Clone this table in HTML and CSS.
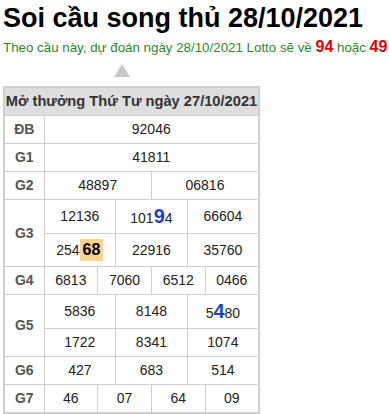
FILE: index.html
```html
<!DOCTYPE html>
<html lang="vi">
<head>
<meta charset="utf-8">
<title>Soi cầu song thủ 28/10/2021</title>
<link rel="stylesheet" href="styles.css">
</head>
<body>
<div class="page">
  <h1 class="title">Soi cầu song thủ 28/10/2021</h1>
  <p class="predict">Theo cầu này, dự đoán ngày 28/10/2021 Lotto sẽ về <b class="hot">94</b> hoặc <b class="hot">49</b></p>
  <div class="pointer"></div>
  <table class="result">
    <colgroup>
      <col class="c-label">
      <col><col><col><col><col><col><col><col><col><col><col><col>
    </colgroup>
    <thead>
      <tr><th colspan="13" class="head">Mở thưởng Thứ Tư ngày 27/10/2021</th></tr>
    </thead>
    <tbody>
      <tr><td class="lbl">ĐB</td><td colspan="12">92046</td></tr>
      <tr><td class="lbl">G1</td><td colspan="12">41811</td></tr>
      <tr><td class="lbl">G2</td><td colspan="6">48897</td><td colspan="6">06816</td></tr>
      <tr><td class="lbl" rowspan="2">G3</td><td colspan="4">12136</td><td colspan="4">101<span class="big">9</span>4</td><td colspan="4">66604</td></tr>
      <tr><td colspan="4">254<span class="mark">68</span></td><td colspan="4">22916</td><td colspan="4">35760</td></tr>
      <tr><td class="lbl">G4</td><td colspan="3">6813</td><td colspan="3">7060</td><td colspan="3">6512</td><td colspan="3">0466</td></tr>
      <tr><td class="lbl" rowspan="2">G5</td><td colspan="4">5836</td><td colspan="4">8148</td><td colspan="4">5<span class="big">4</span>80</td></tr>
      <tr><td colspan="4">1722</td><td colspan="4">8341</td><td colspan="4">1074</td></tr>
      <tr><td class="lbl">G6</td><td colspan="4">427</td><td colspan="4">683</td><td colspan="4">514</td></tr>
      <tr><td class="lbl">G7</td><td colspan="3">46</td><td colspan="3">07</td><td colspan="3">64</td><td colspan="3">09</td></tr>
    </tbody>
  </table>
</div>
</body>
</html>
```
FILE: styles.css
```css
html, body {
  margin: 0;
  padding: 0;
  background: #fff;
}
body {
  font-family: "Liberation Sans", Arial, sans-serif;
  color: #222;
}
.page {
  padding: 3px 0 0 3px;
}
.title {
  margin: 0;
  font-size: 27px;
  font-weight: bold;
  color: #000;
  line-height: normal;
}
.predict {
  margin: 4px 0 0 0;
  font-size: 13.33px;
  color: #2a8a2a;
  white-space: nowrap;
}
.hot {
  font-size: 16px;
  color: #e60000;
}
.pointer {
  width: 0;
  height: 0;
  margin: 8px 0 0 111px;
  border-left: 8px solid transparent;
  border-right: 8px solid transparent;
  border-bottom: 13px solid #c8c8c8;
}
.result {
  margin-top: 9px;
  width: 257px;
  table-layout: fixed;
  border-collapse: collapse;
  border: 2px solid #cfcfcf;
}
.c-label {
  width: 40px;
}
.result th,
.result td {
  border: 1px solid #cfcfcf;
  padding: 5px 0;
  line-height: 17px;
  text-align: center;
  white-space: nowrap;
}
.head {
  background: #dedede;
  font-size: 14.67px;
  font-weight: bold;
  color: #333;
}
.result td {
  font-size: 14px;
  color: #222;
}
.result td.lbl {
  font-weight: bold;
  color: #555;
}
.big {
  font-size: 20px;
  font-weight: bold;
  color: #1f3fd6;
  line-height: normal;
}
.mark {
  display: inline-block;
  font-size: 16px;
  font-weight: bold;
  color: #000;
  background: #fbd38c;
  padding: 2px 3px;
  line-height: 18px;
}
```
